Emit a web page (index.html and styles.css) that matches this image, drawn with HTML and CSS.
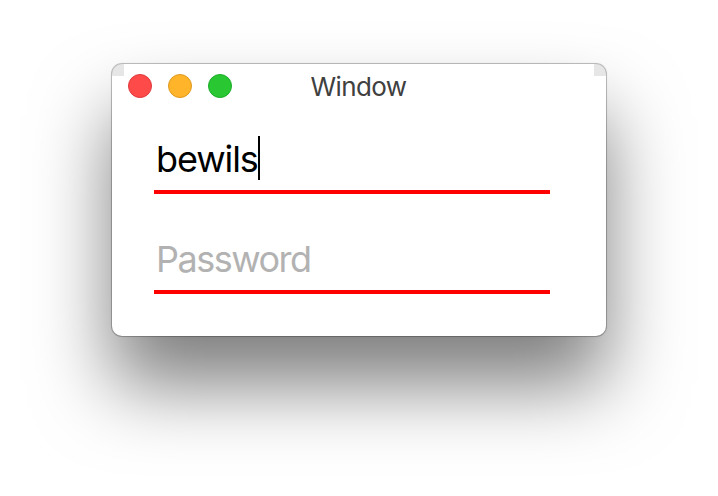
FILE: index.html
```html
<!DOCTYPE html>
<html lang="en">
<head>
<meta charset="utf-8">
<title>Window</title>
<link rel="stylesheet" href="styles.css">
</head>
<body>
<main class="window">
  <header class="titlebar">
    <div class="controls"><span class="dot close"></span><span class="dot minimize"></span><span class="dot zoom"></span></div>
    <h1 class="title">Window</h1>
  </header>
  <form class="form">
    <div class="field"><span class="value">bewils</span><span class="caret"></span></div>
    <div class="field"><span class="placeholder">Password</span></div>
  </form>
</main>
</body>
</html>
```

FILE: styles.css
```css
* { box-sizing: border-box; }
body {
  margin: 0;
  height: 496px;
  padding: 64px 112px;
  overflow: hidden;
  background: #fff;
  font-family: Inter, "Liberation Sans", sans-serif;
}
.window {
  width: 494px;
  height: 272px;
  border-radius: 10px;
  background:
    linear-gradient(#e6e6e6, #e6e6e6) 0 0 / 12px 12px no-repeat,
    linear-gradient(#e6e6e6, #e6e6e6) 100% 0 / 12px 12px no-repeat,
    #fff;
  box-shadow: 0 0 0 1px rgba(0,0,0,.22), 0 0 3px rgba(0,0,0,.1), 0 49px 77px rgba(0,0,0,.51);
}
.titlebar {
  display: grid;
  grid-template-columns: 1fr auto 1fr;
  align-items: start;
  height: 44px;
  padding: 0 16px;
}
.controls { display: flex; gap: 16px; padding-top: 10px; }
.dot { width: 24px; height: 24px; border-radius: 50%; border: 1px solid; }
.close { background: #ff4a4a; border-color: #e0383c; }
.minimize { background: #ffb429; border-color: #de9a20; }
.zoom { background: #29c732; border-color: #1dad2b; }
.title { margin: 0; padding: 1px 1px 0 0; font-size: 26px; font-weight: 400; line-height: 44px; letter-spacing: -.6px; color: #404040; }
.form { display: flex; flex-direction: column; gap: 42px; padding: 28px 56px 0 42px; }
.field {
  display: flex;
  height: 58px;
  padding-left: 2px;
  border-bottom: 4px solid #f00;
  font-size: 36px;
  line-height: 46px;
  letter-spacing: -1.5px;
}
.value { width: 102px; color: #000; letter-spacing: -1.1px; }
.placeholder { color: #b2b2b2; }
.caret { width: 2px; height: 44px; background: #000; }
```
